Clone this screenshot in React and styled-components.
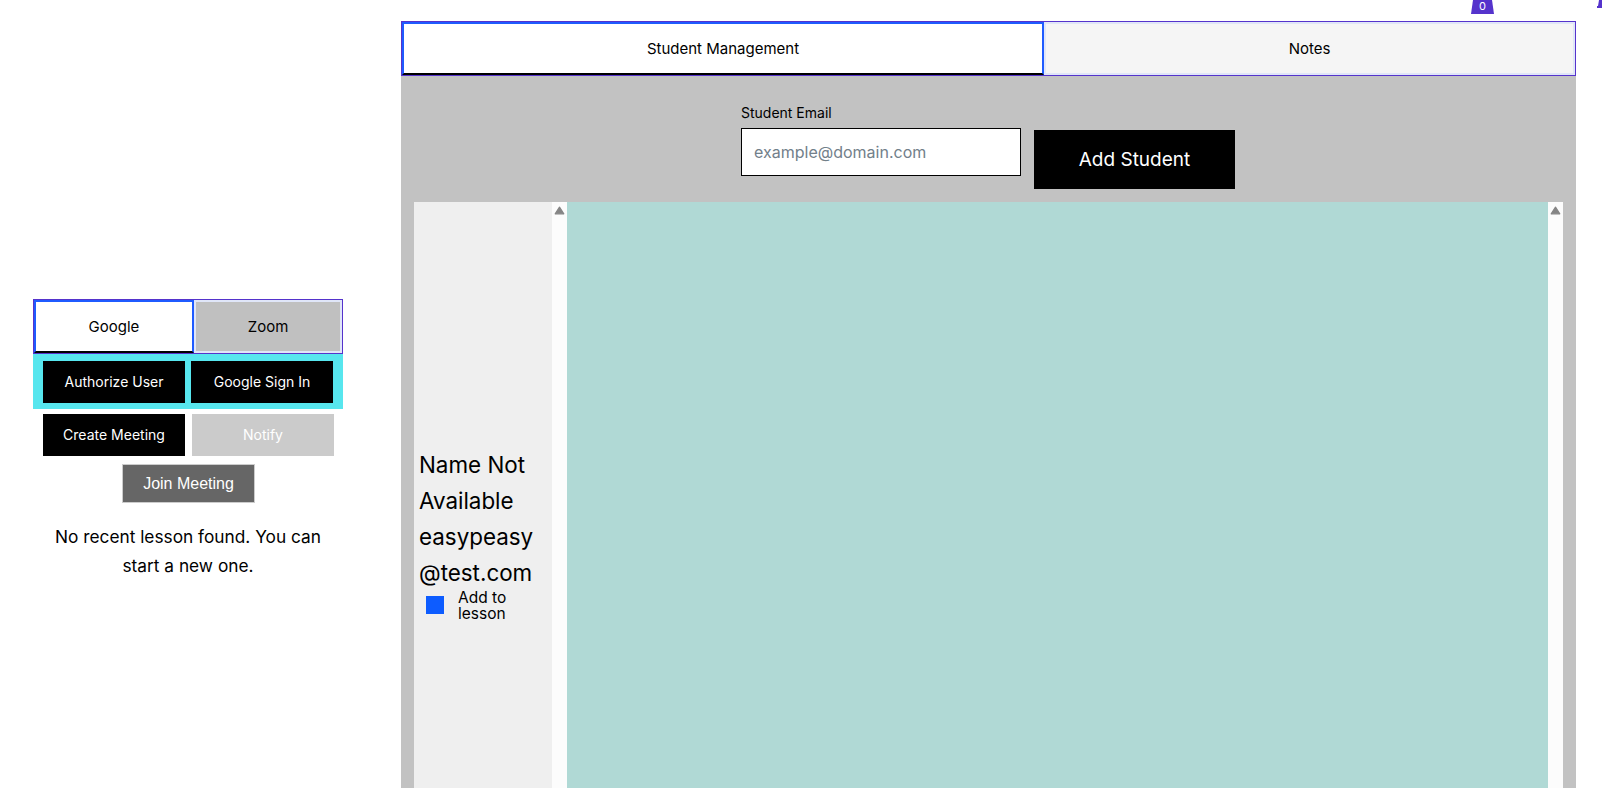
import React from "react";
import styled, { createGlobalStyle } from "styled-components";

const GlobalStyle = createGlobalStyle`
  html, body {
    margin: 0;
    height: 100%;
    background: #fff;
    overflow: hidden;
  }
  * {
    box-sizing: border-box;
  }
`;

const Page = styled.div`
  width: 1602px;
  height: 788px;
  display: flex;
  font-family: Inter, "Noto Sans", sans-serif;
  color: #000;
  overflow: hidden;
`;

const Sidebar = styled.aside`
  width: 401px;
  flex: none;
  padding: 299px 58px 0 33px;
  display: flex;
  flex-direction: column;
`;

const Main = styled.main`
  width: 1175px;
  flex: none;
  display: flex;
  flex-direction: column;
`;

const TopStrip = styled.div`
  position: relative;
  height: 21px;
  flex: none;
  display: flex;
  justify-content: flex-end;
  align-items: flex-start;
  padding-right: 82px;
`;

const Badge = styled.div`
  width: 23px;
  height: 14px;
  background: #5533cc;
  clip-path: polygon(2px 0, 21px 0, 23px 100%, 0 100%);
  color: #fff;
  font-size: 11px;
  line-height: 12px;
  text-align: center;
`;

const EdgeBadge = styled.div`
  position: absolute;
  top: 0;
  left: 1196px;
  width: 10px;
  height: 8px;
  background: #5533cc;
  clip-path: polygon(2px 0, 10px 0, 10px 100%, 0 100%, 0 6px, 1px 6px);
`;

const TabBar = styled.div`
  display: flex;
  flex: none;
  height: ${(p) => p.$height}px;
  border: 1px solid #5533cc;
`;

const Tab = styled.button`
  width: ${(p) => p.$width}px;
  flex: none;
  padding: 0;
  font-family: inherit;
  font-size: 15px;
  color: #000;
  background: ${(p) => (p.$active ? "#fff" : p.$idle)};
  border: 2px solid ${(p) => (p.$active ? "#1f5bff" : "#e0e6f8")};
  border-bottom-color: ${(p) => (p.$active ? "#000" : "#e0e6f8")};
`;

const CyanBand = styled.div`
  flex: none;
  height: 55px;
  background: #57e6ee;
  padding: 7px 10px 6px;
  display: flex;
  gap: 6px;
`;

const ButtonRow = styled.div`
  flex: none;
  display: flex;
  gap: 7px;
  padding: 5px 10px 0;
`;

const ActionButton = styled.button`
  width: 142px;
  height: 42px;
  flex: none;
  padding: 0 0 2px;
  border: 0;
  font-family: inherit;
  font-size: 14px;
  color: #fff;
  background: ${(p) => (p.$disabled ? "#cbcbcb" : "#000")};
`;

const JoinButton = styled.button`
  width: 133px;
  height: 39px;
  margin: 8px 0 0 89px;
  padding: 0;
  flex: none;
  font-family: "Liberation Sans", Arial, sans-serif;
  font-size: 16px;
  color: #fff;
  background: #666;
  border: 1px solid #ccc;
`;

const Message = styled.p`
  margin: 20px 0 0;
  font-size: 17.3px;
  line-height: 28.5px;
  text-align: center;
  padding: 0 10px;
`;

const Panel = styled.section`
  flex: 1;
  min-height: 0;
  background: #c2c2c2;
  display: flex;
  flex-direction: column;
  padding: 0 13px 0 13px;
`;

const AddForm = styled.form`
  height: 126px;
  flex: none;
  display: flex;
  align-items: flex-start;
  gap: 13px;
  padding: 28px 0 0 327px;
`;

const Field = styled.label`
  display: flex;
  flex-direction: column;
  width: 280px;
  gap: 6px;
  font-size: 14px;
  line-height: 18px;
`;

const EmailInput = styled.input`
  height: 48px;
  padding: 0 12px;
  border: 1px solid #000;
  background: #fff;
  font-family: inherit;
  font-size: 16px;
  outline: none;
  &::placeholder {
    color: #72808a;
  }
`;

const AddButton = styled.button`
  width: 201px;
  height: 59px;
  margin-top: 26px;
  padding: 0;
  border: 0;
  background: #000;
  color: #fff;
  font-family: inherit;
  font-size: 19px;
`;

const Lists = styled.div`
  flex: 1;
  min-height: 0;
  display: flex;
`;

const StudentCard = styled.div`
  width: 138px;
  flex: none;
  background: #efefef;
  padding: 245px 0 0 5px;
`;

const StudentName = styled.div`
  font-size: 22.4px;
  line-height: 36px;
`;

const CheckRow = styled.div`
  display: flex;
  align-items: center;
  gap: 14px;
  margin-top: -1px;
  padding-left: 7px;
  font-size: 15.5px;
  line-height: 16px;
`;

const CheckSquare = styled.span`
  width: 18px;
  height: 18px;
  flex: none;
  margin-bottom: 2px;
  background: #0d5cff;
`;

const Scrollbar = styled.div`
  width: 15px;
  flex: none;
  background: #fcfcfc;
  display: flex;
  justify-content: center;
  padding-top: 4px;
`;

const Arrow = styled.svg`
  width: 11px;
  height: 9px;
  fill: #858585;
  stroke: #858585;
  stroke-width: 1.2;
  stroke-linejoin: round;
`;

const Lesson = styled.div`
  flex: 1;
  background: #b0d9d5;
`;

const UpArrow = () => (
  <Arrow viewBox="0 0 11 9">
    <path d="M5.5 1.2 L9.8 7.8 L1.2 7.8 Z" />
  </Arrow>
);

export default function App() {
  return (
    <Page>
      <GlobalStyle />
      <Sidebar>
        <TabBar $height={55}>
          <Tab $active $width={160}>Google</Tab>
          <Tab $idle="#c0c0c0" $width={148}>Zoom</Tab>
        </TabBar>
        <CyanBand>
          <ActionButton>Authorize User</ActionButton>
          <ActionButton>Google Sign In</ActionButton>
        </CyanBand>
        <ButtonRow>
          <ActionButton>Create Meeting</ActionButton>
          <ActionButton $disabled>Notify</ActionButton>
        </ButtonRow>
        <JoinButton>Join Meeting</JoinButton>
        <Message>No recent lesson found. You can start a new one.</Message>
      </Sidebar>
      <Main>
        <TopStrip>
          <Badge>0</Badge>
          <EdgeBadge />
        </TopStrip>
        <TabBar $height={55}>
          <Tab $active $width={642}>Student Management</Tab>
          <Tab $idle="#f5f5f5" $width={531}>Notes</Tab>
        </TabBar>
        <Panel>
          <AddForm>
            <Field>
              Student Email
              <EmailInput placeholder="example@domain.com" />
            </Field>
            <AddButton type="button">Add Student</AddButton>
          </AddForm>
          <Lists>
            <StudentCard>
              <StudentName>
                Name Not
                <br />
                Available
                <br />
                easypeasy
                <br />
                @test.com
              </StudentName>
              <CheckRow>
                <CheckSquare />
                <span>
                  Add to
                  <br />
                  lesson
                </span>
              </CheckRow>
            </StudentCard>
            <Scrollbar>
              <UpArrow />
            </Scrollbar>
            <Lesson />
            <Scrollbar>
              <UpArrow />
            </Scrollbar>
          </Lists>
        </Panel>
      </Main>
    </Page>
  );
}
